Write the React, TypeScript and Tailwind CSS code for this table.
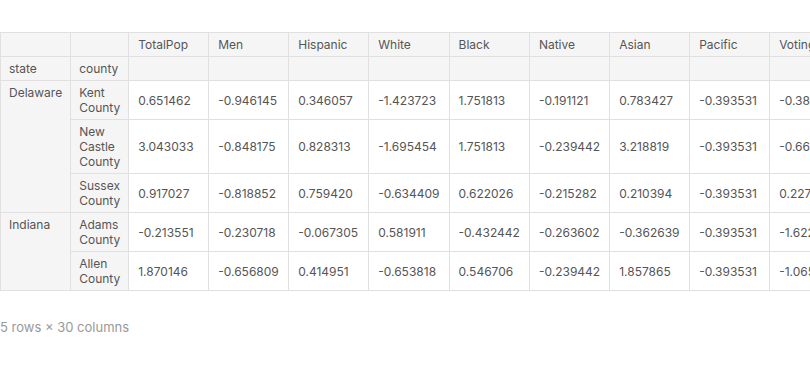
const columns = ['TotalPop', 'Men', 'Hispanic', 'White', 'Black', 'Native', 'Asian', 'Pacific', 'VotingAgeCitizen', 'Income'];

const rows = [
  { state: 'Delaware', span: 3, county: 'Kent County', values: ['0.651462', '-0.946145', '0.346057', '-1.423723', '1.751813', '-0.191121', '0.783427', '-0.393531', '-0.389842', '0.271263'] },
  { state: null, span: 0, county: 'New Castle County', values: ['3.043033', '-0.848175', '0.828313', '-1.695454', '1.751813', '-0.239442', '3.218819', '-0.393531', '-0.661540', '1.121204'] },
  { state: null, span: 0, county: 'Sussex County', values: ['0.917027', '-0.818852', '0.759420', '-0.634409', '0.622026', '-0.215282', '0.210394', '-0.393531', '0.227123', '0.318024'] },
  { state: 'Indiana', span: 2, county: 'Adams County', values: ['-0.213551', '-0.230718', '-0.067305', '0.581911', '-0.432442', '-0.263602', '-0.362639', '-0.393531', '-1.622114', '-0.101234'] },
  { state: null, span: 0, county: 'Allen County', values: ['1.870146', '-0.656809', '0.414951', '-0.653818', '0.546706', '-0.239442', '1.857865', '-0.393531', '-1.065203', '0.140102'] },
];

const cell = 'border border-[#e0e0e0] px-[9px] py-1 text-left font-normal';
const head = cell + ' bg-[#f5f5f5]';
const index = 'border border-[#e0e0e0] px-2 py-1 text-left font-normal bg-[#f5f5f5]';

export default function App() {
  return (
    <div className="w-[810px] h-[379px] overflow-hidden bg-white pt-8 font-['Inter',sans-serif] text-[12px] leading-[15px] text-[#555]">
      <div className="overflow-hidden">
        <table className="border-collapse">
          <thead>
            <tr>
              <th className={index}></th>
              <th className={index}></th>
              {columns.map((c) => (
                <th key={c} className={head + ' whitespace-nowrap'}>
                  <div className="min-w-[61px]">{c}</div>
                </th>
              ))}
            </tr>
            <tr>
              <th className={index}>state</th>
              <th className={index}>county</th>
              {columns.map((c) => (
                <th key={c} className={head}></th>
              ))}
            </tr>
          </thead>
          <tbody>
            {rows.map((r) => (
              <tr key={r.county}>
                {r.state && (
                  <th rowSpan={r.span} className={index + ' align-top'}>{r.state}</th>
                )}
                <th className={index + ' align-middle'}>{r.county}</th>
                {r.values.map((v, i) => (
                  <td key={i} className={cell + ' whitespace-nowrap'}>{v}</td>
                ))}
              </tr>
            ))}
          </tbody>
        </table>
      </div>
      <p className="mt-[29px] text-[13px] text-[#999]">5 rows × 30 columns</p>
    </div>
  );
}
